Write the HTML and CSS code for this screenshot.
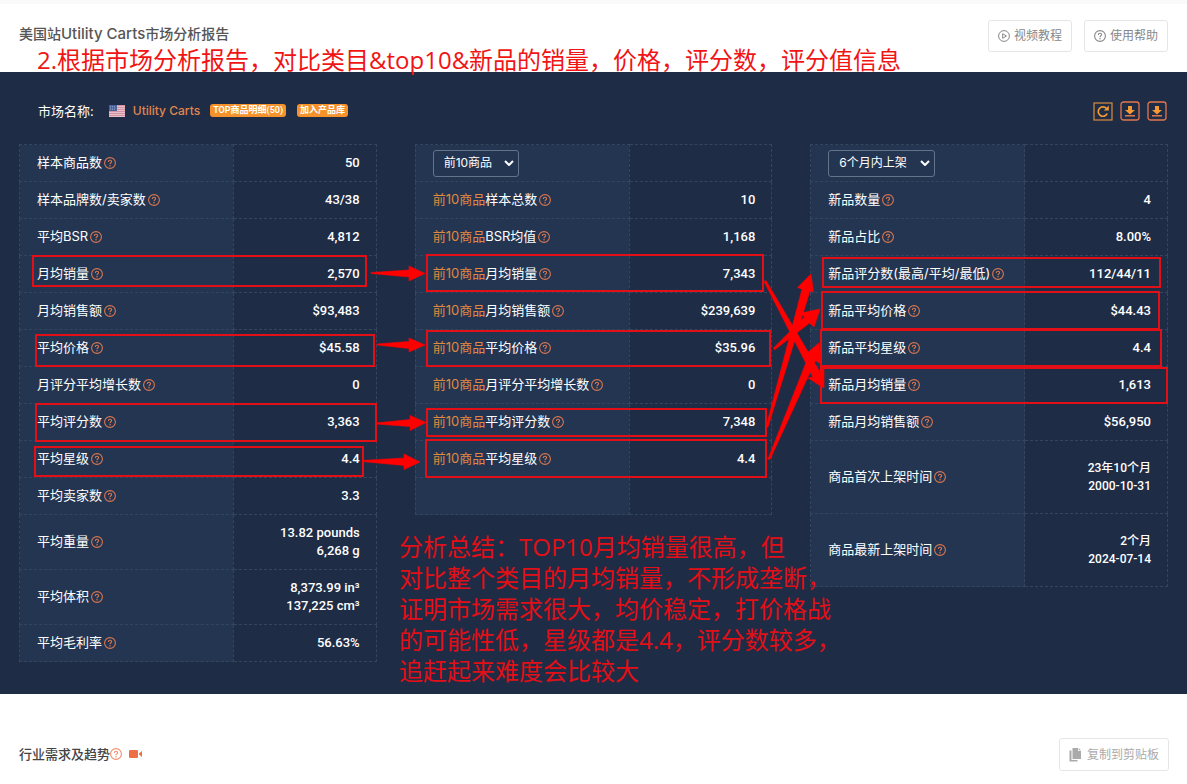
FILE: index.html
```html
<!DOCTYPE html>
<html lang="zh-CN">
<head>
<meta charset="utf-8">
<title>美国站Utility Carts市场分析报告</title>
<link rel="stylesheet" href="styles.css">
</head>
<body>
<svg class="defs" aria-hidden="true">
  <symbol id="help" viewBox="0 0 12 12"><circle cx="6" cy="6" r="5.4" fill="none" stroke="currentColor" stroke-width="1.1"/><path d="M4.4 4.9C4.4 3.8 5.1 3.2 6 3.2s1.6.6 1.6 1.5C7.600 5.800 6 5.800 6 7.200" fill="none" stroke="currentColor" stroke-width="1.1"/><circle cx="6" cy="8.700" r=".75" fill="currentColor"/></symbol>
  <symbol id="download" viewBox="0 0 20 20"><rect x="1" y="1" width="18" height="18" rx="2.500" fill="none" stroke="#e2774f" stroke-width="1.300"/><path d="M8 5h4v4h3l-5 4.500L5 9h3z" fill="#f39a34"/><path d="M5 14.800h10" stroke="#ee7c4c" stroke-width="1.400"/></symbol>
  <symbol id="chevron" viewBox="0 0 10 6"><path d="M1 1l4 4 4-4" fill="none" stroke="currentColor" stroke-width="2"/></symbol>
</svg>
<main class="page">
  <header class="topbar">
    <h1 class="title">美国站<span class="latin">Utility Carts</span>市场分析报告</h1>
    <div class="actions">
      <button class="btn" type="button"><svg class="ico" viewBox="0 0 12 12"><circle cx="6" cy="6" r="5.400" fill="none" stroke="currentColor"/><path d="M4.700 3.700v4.600L8.400 6z" fill="none" stroke="currentColor"/></svg>视频教程</button>
      <button class="btn" type="button"><svg class="ico"><use href="#help"/></svg>使用帮助</button>
    </div>
  </header>

  <section class="panel">
    <div class="market">
      <span class="market-label">市场名称:</span>
      <svg class="flag" viewBox="0 0 16 12"><path fill="#f3e3ea" d="M0 0h16v12H0z"/><path d="M0 .8h16M0 2.800h16M0 4.800h16M0 6.800h16M0 8.800h16M0 10.800h16" stroke="#c9707f"/><path fill="#46629a" d="M0 0h8v6H0z"/><path d="M1 1.500h6M1 3h6M1 4.500h6" stroke="#a9b8d6" stroke-width=".6" stroke-dasharray="1 1"/></svg>
      <a class="market-name" href="#">Utility Carts</a>
      <a class="badge" href="#">TOP商品明细(50)</a>
      <a class="badge" href="#">加入产品库</a>
      <div class="tools">
        <button class="tool" type="button" aria-label="刷新"><svg viewBox="0 0 20 20"><rect x="1" y="2" width="18" height="17" fill="none" stroke="#d98d3d" stroke-width="1.200"/><path d="M14.200 12.500A4.700 4.700 0 1 1 13.500 7.500" fill="none" stroke="#f39a34" stroke-width="1.700"/><path d="M15.800 4.500v5h-5z" fill="#f39a34"/></svg></button>
        <button class="tool" type="button" aria-label="下载"><svg><use href="#download"/></svg></button>
        <button class="tool" type="button" aria-label="导出"><svg><use href="#download"/></svg></button>
      </div>
    </div>

    <div class="tables">
      <table class="stats">
        <tr><th scope="row">样本商品数<svg class="help"><use href="#help"/></svg></th><td>50</td></tr>
        <tr><th scope="row">样本品牌数/卖家数<svg class="help"><use href="#help"/></svg></th><td>43/38</td></tr>
        <tr><th scope="row">平均BSR<svg class="help"><use href="#help"/></svg></th><td>4,812</td></tr>
        <tr><th scope="row">月均销量<svg class="help"><use href="#help"/></svg></th><td>2,570</td></tr>
        <tr><th scope="row">月均销售额<svg class="help"><use href="#help"/></svg></th><td>$93,483</td></tr>
        <tr><th scope="row">平均价格<svg class="help"><use href="#help"/></svg></th><td>$45.58</td></tr>
        <tr><th scope="row">月评分平均增长数<svg class="help"><use href="#help"/></svg></th><td>0</td></tr>
        <tr><th scope="row">平均评分数<svg class="help"><use href="#help"/></svg></th><td>3,363</td></tr>
        <tr><th scope="row">平均星级<svg class="help"><use href="#help"/></svg></th><td>4.4</td></tr>
        <tr><th scope="row">平均卖家数<svg class="help"><use href="#help"/></svg></th><td>3.3</td></tr>
        <tr><th scope="row">平均重量<svg class="help"><use href="#help"/></svg></th><td>13.82 pounds<br>6,268 g</td></tr>
        <tr><th scope="row">平均体积<svg class="help"><use href="#help"/></svg></th><td>8,373.99 in³<br>137,225 cm³</td></tr>
        <tr><th scope="row">平均毛利率<svg class="help"><use href="#help"/></svg></th><td>56.63%</td></tr>
      </table>

      <table class="stats">
        <tr><th class="pick"><span class="select"><select aria-label="商品范围"><option>前10商品</option></select><svg><use href="#chevron"/></svg></span></th><td></td></tr>
        <tr><th scope="row"><em>前10商品</em>样本总数<svg class="help"><use href="#help"/></svg></th><td>10</td></tr>
        <tr><th scope="row"><em>前10商品</em>BSR均值<svg class="help"><use href="#help"/></svg></th><td>1,168</td></tr>
        <tr><th scope="row"><em>前10商品</em>月均销量<svg class="help"><use href="#help"/></svg></th><td>7,343</td></tr>
        <tr><th scope="row"><em>前10商品</em>月均销售额<svg class="help"><use href="#help"/></svg></th><td>$239,639</td></tr>
        <tr><th scope="row"><em>前10商品</em>平均价格<svg class="help"><use href="#help"/></svg></th><td>$35.96</td></tr>
        <tr><th scope="row"><em>前10商品</em>月评分平均增长数<svg class="help"><use href="#help"/></svg></th><td>0</td></tr>
        <tr><th scope="row"><em>前10商品</em>平均评分数<svg class="help"><use href="#help"/></svg></th><td>7,348</td></tr>
        <tr><th scope="row"><em>前10商品</em>平均星级<svg class="help"><use href="#help"/></svg></th><td>4.4</td></tr>
        <tr><th></th><td></td></tr>
      </table>

      <table class="stats">
        <tr><th class="pick"><span class="select wide"><select aria-label="上架时间"><option>6个月内上架</option></select><svg><use href="#chevron"/></svg></span></th><td></td></tr>
        <tr><th scope="row">新品数量<svg class="help"><use href="#help"/></svg></th><td>4</td></tr>
        <tr><th scope="row">新品占比<svg class="help"><use href="#help"/></svg></th><td>8.00%</td></tr>
        <tr><th scope="row">新品评分数(最高/平均/最低)<svg class="help"><use href="#help"/></svg></th><td>112/44/11</td></tr>
        <tr><th scope="row">新品平均价格<svg class="help"><use href="#help"/></svg></th><td>$44.43</td></tr>
        <tr><th scope="row">新品平均星级<svg class="help"><use href="#help"/></svg></th><td>4.4</td></tr>
        <tr><th scope="row">新品月均销量<svg class="help"><use href="#help"/></svg></th><td>1,613</td></tr>
        <tr><th scope="row">新品月均销售额<svg class="help"><use href="#help"/></svg></th><td>$56,950</td></tr>
        <tr class="tall"><th scope="row">商品首次上架时间<svg class="help"><use href="#help"/></svg></th><td>23年10个月<br>2000-10-31</td></tr>
        <tr class="tall"><th scope="row">商品最新上架时间<svg class="help"><use href="#help"/></svg></th><td>2个月<br>2024-07-14</td></tr>
      </table>
    </div>
  </section>

  <section class="trend">
    <h2 class="trend-title">行业需求及趋势<svg class="help light"><use href="#help"/></svg><svg class="video" viewBox="0 0 14 8"><rect width="9" height="8" rx="1" fill="#ee6f45"/><path d="M10 3.500L13 1v6l-3-2.500z" fill="#ee6f45"/></svg></h2>
    <button class="btn copy" type="button"><svg class="copy-ico" viewBox="0 0 12 14"><path d="M3.500 0H9v3h3v8H3.500z" fill="currentColor"/><path d="M9.700 0L12 2.300H9.700z" fill="currentColor"/><path d="M2.500 2.500H.5V13.500H8.500V12H2.500z" fill="currentColor"/></svg>复制到剪贴板</button>
  </section>

  <svg class="marks" viewBox="0 0 1187 784" aria-hidden="true">
    <g fill="none" stroke="#e20f16" stroke-width="2">
      <rect x="33" y="256" width="333" height="30"/>
      <rect x="36" y="335" width="338" height="31"/>
      <rect x="36" y="404" width="340" height="37"/>
      <rect x="35" y="447" width="328" height="29"/>
      <rect x="427" y="255" width="336" height="36"/>
      <rect x="427" y="331" width="343" height="35"/>
      <rect x="427" y="409" width="339" height="27"/>
      <rect x="426" y="440" width="340" height="37"/>
      <rect x="823" y="258" width="337" height="29"/>
      <rect x="822" y="292" width="337" height="37"/>
      <rect x="821" y="330" width="340" height="36"/>
      <rect x="821" y="368" width="346" height="35"/>
    </g>
    <g fill="#f00" stroke="#f00" stroke-width=".6" stroke-linejoin="round">
      <path d="M371 272.500L409 270V266L425 273.500L409 281V277L371 273.500z"/>
      <path d="M377 344L409 341.500V338L425 345L409 352V348.500L377 345z"/>
      <path d="M376 423L410 419.500V415.500L426 422.500L410 430.500V426.500L376 424z"/>
      <path d="M362 460.500L404 458V454L420 462L404 469.500V465.500L362 461.500z"/>
      <path d="M766 280.500L820.500 373L824 366L824 388L808 378L813 377L764 281.500z"/>
      <path d="M773.300 348.200L804.400 317L801 313L820 309L814 327L809.600 323L774.700 349.800z"/>
      <path d="M766 427L802 289L797.500 287.500L811 274L813.500 292L810 291L768 427z"/>
      <path d="M768 459L808 357.500L804 355.500L819 343L821 364L815.500 360.500L770 459.500z"/>
    </g>
  </svg>
  <p class="note note-top">2.根据市场分析报告，对比类目&amp;top10&amp;新品的销量，价格，评分数，评分值信息</p>
  <p class="note note-summary">分析总结：TOP10月均销量很高，但<br>对比整个类目的月均销量，不形成垄断，<br>证明市场需求很大，均价稳定，打价格战<br>的可能性低，星级都是4.4，评分数较多，<br>追赶起来难度会比较大</p>
</main>
</body>
</html>
```

FILE: styles.css
```css
* { box-sizing: border-box; }
body {
  margin: 0;
  background: #fff;
  font: 13px/18px Inter, "Noto Sans CJK SC", sans-serif;
}
button, select { font: inherit; }
.defs { position: absolute; width: 0; height: 0; }
.page { position: relative; }

.topbar {
  display: flex;
  justify-content: space-between;
  align-items: flex-start;
  min-height: 72px;
  padding: 16px 19px 0;
  border-top: 4px solid #fafafa;
}
.title { margin: 0; padding-top: 5px; font-size: 14px; font-weight: 500; color: #555; }
.latin { font-size: 15px; }
.actions { display: flex; gap: 12px; }
.btn {
  display: flex;
  align-items: center;
  gap: 4px;
  height: 32px;
  padding: 0 9px;
  border: 1px solid #e4e7ea;
  border-radius: 3px;
  background: #fff;
  color: #888;
  font-size: 12px;
}
.ico { width: 12px; height: 12px; }

.panel { padding: 0 19px 32px; background: #1e2c46; color: #fff; }
.market { display: flex; align-items: center; height: 72px; padding: 5px 1px 0 19px; }
.market-label { margin-right: 15px; }
.flag { width: 16px; height: 12px; margin-right: 8px; }
.market-name { margin-right: 10px; color: #e0864c; font-size: 12px; font-weight: 500; text-decoration: none; }
.badge {
  margin-right: 11px;
  padding: 0 3px;
  border-radius: 3px;
  background: #f6922b;
  color: #fff;
  font-family: Roboto, "Noto Sans CJK SC", sans-serif;
  font-size: 9px;
  font-weight: 600;
  line-height: 13px;
  text-decoration: none;
}
.tools { display: flex; gap: 7px; margin-left: auto; }
.tool { width: 20px; height: 20px; padding: 0; border: 0; background: none; }
.tool svg { display: block; width: 20px; height: 20px; }

.tables { display: grid; grid-template-columns: repeat(3, 1fr); gap: 38px; align-items: start; }
.stats { width: 100%; border-collapse: collapse; table-layout: fixed; }
.stats tr { height: 37px; }
.stats .tall { height: 73px; }
.stats th, .stats td { border: 1px dashed #34455e; padding: 9px 16px 9px 17px; }
.stats th { width: 60%; padding-top: 8px; padding-bottom: 10px; background: #243552; font-weight: 400; text-align: left; white-space: nowrap; }
.stats td { font-family: Roboto, "Noto Sans CJK SC", sans-serif; font-weight: 500; text-align: right; }
.stats .tall td { font-size: 12px; }
.stats em { color: #e0893f; font-style: normal; }
.stats .pick { padding-top: 0; padding-bottom: 0; }
.help { width: 12px; height: 12px; margin-left: 2px; color: #d9774f; vertical-align: -2px; }
.light { color: #f08f70; }
.select { position: relative; display: block; width: 86px; }
.wide { width: 107px; }
.select select {
  display: block;
  appearance: none;
  width: 100%;
  height: 27px;
  padding: 0 10px;
  border: 1px solid #64728a;
  border-radius: 3px;
  background: transparent;
  color: #fff;
  font-size: 12px;
}
.select svg { position: absolute; top: 10px; right: 5px; width: 10px; height: 6px; pointer-events: none; }

.trend { display: flex; justify-content: space-between; align-items: center; padding: 44px 18px 13px 19px; }
.trend-title { display: flex; align-items: center; margin: 0; padding-bottom: 2px; font-size: 13px; font-weight: 500; color: #444; }
.trend-title .help { margin: 0 7px 0 0; }
.video { width: 14px; height: 8px; }
.copy { height: 33px; gap: 6px; color: #aaa; }
.copy-ico { width: 12px; height: 14px; }

.marks { position: absolute; top: 0; left: 0; width: 1187px; height: 784px; pointer-events: none; }
.note {
  position: absolute;
  margin: 0;
  color: #f01414;
  font: 24px/31px "Open Sans", "Noto Sans CJK SC", sans-serif;
  white-space: nowrap;
}
.note-top { top: 44px; left: 37px; }
.note-summary { top: 531px; left: 399px; color: #e20f16; }
```
